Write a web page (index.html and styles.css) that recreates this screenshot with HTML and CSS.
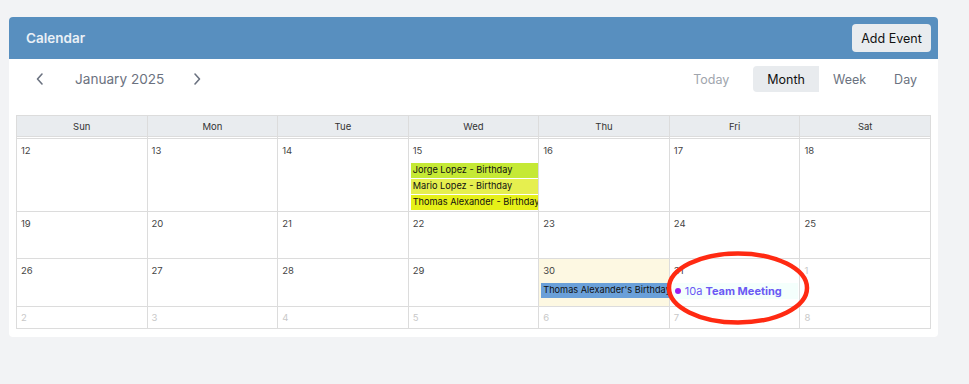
FILE: index.html
```html
<!DOCTYPE html>
<html>
<head>
<meta charset="utf-8">
<link rel="stylesheet" href="styles.css">
</head>
<body>
<div class="card">
  <div class="card-header">
    <span class="title">Calendar</span>
    <button class="add-btn">Add Event</button>
  </div>
  <div class="toolbar">
    <div class="nav">
      <button class="chev"><svg width="10" height="14" viewBox="0 0 10 14"><path d="M7 2 L2.5 7 L7 12" fill="none" stroke="#6b7280" stroke-width="1.6" stroke-linecap="round" stroke-linejoin="round"/></svg></button>
      <span class="month-label">January 2025</span>
      <button class="chev"><svg width="10" height="14" viewBox="0 0 10 14"><path d="M3 2 L7.5 7 L3 12" fill="none" stroke="#6b7280" stroke-width="1.6" stroke-linecap="round" stroke-linejoin="round"/></svg></button>
    </div>
    <div class="views">
      <button class="vbtn today">Today</button>
      <button class="vbtn active">Month</button>
      <button class="vbtn">Week</button>
      <button class="vbtn">Day</button>
    </div>
  </div>
  <div class="grid-wrap">
    <table class="cal">
      <thead>
        <tr class="dow"><th>Sun</th><th>Mon</th><th>Tue</th><th>Wed</th><th>Thu</th><th>Fri</th><th>Sat</th></tr>
      </thead>
      <tbody>
        <tr class="stub"><td></td><td></td><td></td><td></td><td></td><td></td><td></td></tr>
        <tr class="wk tall">
          <td><div class="num">12</div></td>
          <td><div class="num">13</div></td>
          <td><div class="num">14</div></td>
          <td><div class="num">15</div>
            <div class="ev ev-jorge">Jorge Lopez - Birthday</div>
            <div class="ev ev-mario">Mario Lopez - Birthday</div>
            <div class="ev ev-thomas">Thomas Alexander - Birthday</div>
          </td>
          <td><div class="num">16</div></td>
          <td><div class="num">17</div></td>
          <td><div class="num">18</div></td>
        </tr>
        <tr class="wk mid">
          <td><div class="num">19</div></td>
          <td><div class="num">20</div></td>
          <td><div class="num">21</div></td>
          <td><div class="num">22</div></td>
          <td><div class="num">23</div></td>
          <td><div class="num">24</div></td>
          <td><div class="num">25</div></td>
        </tr>
        <tr class="wk mid2">
          <td><div class="num">26</div></td>
          <td><div class="num">27</div></td>
          <td><div class="num">28</div></td>
          <td><div class="num">29</div></td>
          <td class="today-cell"><div class="num">30</div>
            <div class="ev ev-blue">Thomas Alexander's Birthday</div>
          </td>
          <td class="fri"><div class="num">31</div>
            <div class="ev ev-meet"><span class="dot"></span><span class="time">10a</span><b>Team Meeting</b></div>
          </td>
          <td><div class="num other">1</div></td>
        </tr>
        <tr class="wk short">
          <td><div class="num other">2</div></td>
          <td><div class="num other">3</div></td>
          <td><div class="num other">4</div></td>
          <td><div class="num other">5</div></td>
          <td><div class="num other">6</div></td>
          <td><div class="num other">7</div></td>
          <td><div class="num other">8</div></td>
        </tr>
      </tbody>
    </table>
    <svg class="circle" width="150" height="80" viewBox="0 0 150 80"><ellipse cx="75" cy="40" rx="69" ry="34.5" fill="none" stroke="#ff2a12" stroke-width="4.5"/></svg>
  </div>
</div>
</body>
</html>
```

FILE: styles.css
```css
html, body {
  margin: 0;
  padding: 0;
  background: #f2f3f5;
  font-family: Inter, "Liberation Sans", sans-serif;
}
.card {
  position: relative;
  margin: 17px 0 0 9px;
  width: 929px;
  background: #fff;
  border-radius: 4px;
  padding-bottom: 8px;
}
.card-header {
  height: 42px;
  background: #588fbf;
  border-radius: 4px 4px 0 0;
  display: flex;
  align-items: center;
  justify-content: space-between;
  padding: 0 7px 0 17px;
}
.title {
  color: #eaf0f6;
  font-size: 13.5px;
  font-weight: 600;
}
.add-btn {
  height: 28px;
  width: 79px;
  border: none;
  border-radius: 4px;
  background: #e9ecef;
  color: #111;
  font-family: inherit;
  font-size: 12.5px;
  padding: 0;
}
.toolbar {
  display: flex;
  justify-content: space-between;
  padding: 7px 7px 0 25px;
  height: 49px;
  align-items: flex-start;
}
.nav {
  display: flex;
  align-items: center;
  height: 26px;
}
.chev {
  border: none;
  background: none;
  padding: 0;
  width: 12px;
  height: 26px;
  display: flex;
  align-items: center;
  justify-content: center;
}
.month-label {
  font-size: 13.6px;
  color: #6b7280;
  margin: 0 27px 0 29px;
}
.views {
  display: flex;
  align-items: center;
}
.vbtn {
  border: none;
  background: none;
  font-family: inherit;
  font-size: 12.5px;
  color: #6b7280;
  height: 26px;
  padding: 0 14px;
  border-radius: 4px;
}
.vbtn.today {
  color: #a0a5ad;
  margin-right: 10px;
}
.vbtn.active {
  background: #e8ebee;
  color: #111;
  border-radius: 4px 0 0 4px;
}
.grid-wrap {
  padding: 0 0 0 7px;
}
.cal {
  width: 915px;
  border-collapse: collapse;
  table-layout: fixed;
}
.cal th, .cal td {
  border: 1px solid #dcdcdc;
  padding: 0;
  vertical-align: top;
}
.dow th {
  background: #e9ecef;
  height: 20px;
  font-size: 9.5px;
  font-weight: 400;
  color: #333;
  vertical-align: middle;
}
.stub td { height: 1px; }
.wk.tall td { height: 71px; }
.wk.mid td { height: 46px; }
.wk.mid2 td { height: 47px; }
.wk.short td { height: 21px; }
.num {
  font-size: 9.5px;
  color: #444;
  padding: 6px 0 0 4px;
  height: 17px;
  box-sizing: border-box;
}
.short .num { padding-top: 5px; }
.num.other { color: #c8c8c8; }
.ev {
  font-size: 9.2px;
  color: #111;
  height: 14.5px;
  line-height: 14.5px;
  padding-left: 2px;
  margin: 0 0 1.5px 2px;
  white-space: nowrap;
  overflow: hidden;
}
.wk.tall .num { height: 24px; }
.ev-jorge { background: #c5e935; }
.ev-mario { background: #e6ef4f; }
.ev-thomas { background: #e6f018; }
.today-cell { background: #fdf8e2; }
.mid2 .num { height: 24px; }
.ev-blue {
  background: #6aa0d9;
  margin: 0 0 0 2px;
}
.ev-meet {
  background: #f4fffc;
  color: #6a5af4;
  font-size: 11px;
  height: 16px;
  line-height: 16px;
  margin: 0 1px 0 3px;
  padding-left: 2px;
  display: flex;
  align-items: center;
  gap: 3px;
}
.ev-meet b { font-weight: 700; }
.dot {
  width: 6px;
  height: 6px;
  border-radius: 50%;
  background: #9a1ff0;
  margin-right: 1px;
}
.circle {
  position: absolute;
  left: 654px;
  top: 231px;
  pointer-events: none;
}
```
